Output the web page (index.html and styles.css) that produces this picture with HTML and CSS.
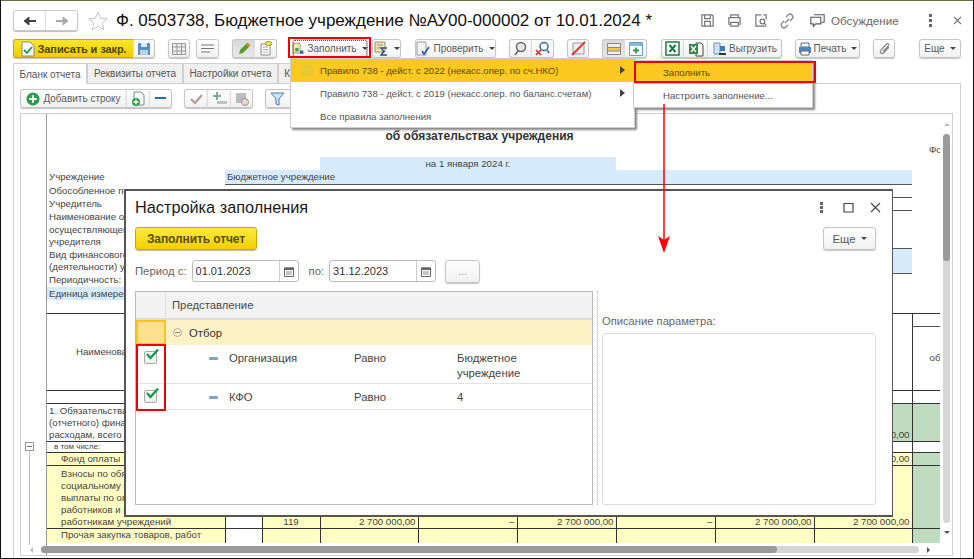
FILE: index.html
```html
<!DOCTYPE html>
<html lang="ru">
<head>
    <meta charset="UTF-8">
    <title>Ф. 0503738</title>
    <link rel="stylesheet" href="styles.css">
</head>
<body>
<div class="window">

    <div class="head">
        <div class="nav">
            <span class="nav-b"><svg width="14" height="10" viewBox="0 0 14 10"><path d="M13 5H5" stroke="#444" stroke-width="2"/><path d="M6 1v8L1 5z" fill="#444" stroke="#444"/></svg></span>
            <span class="nav-b"><svg width="14" height="10" viewBox="0 0 14 10"><path d="M1 5h8" stroke="#aaa" stroke-width="2"/><path d="M8 1v8l5-4z" fill="#aaa" stroke="#aaa"/></svg></span>
        </div>
        <svg class="star" width="22" height="22" viewBox="0 0 22 22"><path d="M11 2l2.700 6.200 6.500.6-4.900 4.400 1.500 6.600L11 16.300l-5.800 3.500 1.500-6.600-4.900-4.400 6.500-.6z" fill="#fff" stroke="#c4c4c4"/></svg>
        <h1>Ф. 0503738, Бюджетное учреждение №АУ00-000002 от 10.01.2024 *</h1>
        <div class="head-tools">
            <svg class="ht1" width="15" height="15" viewBox="0 0 16 16" fill="none" stroke="#777" stroke-width="1.300"><path d="M2 2h11l1 1v11H2zM5 2v4h6V2M5 14v-5h6v5"/></svg>
            <svg class="ht2" width="15" height="15" viewBox="0 0 16 16" fill="none" stroke="#777" stroke-width="1.300"><path d="M4 5V2h8v3M4 12H2V5h12v7h-2M4 10h8v4H4z"/></svg>
            <svg class="ht3" width="15" height="15" viewBox="0 0 16 16" fill="none" stroke="#777" stroke-width="1.300"><path d="M8 2H2v12h11M10 2h3v5"/><circle cx="9" cy="9" r="2.500"/><path d="M11 11l2 2"/></svg>
            <svg class="ht4" width="16" height="16" viewBox="0 0 16 16" fill="none" stroke="#888" stroke-width="1.300"><path d="M7 4l2-2a2.800 2.800 0 0 1 4 4l-2 2M9 12l-2 2a2.800 2.800 0 0 1-4-4l2-2M6 10l4-4"/></svg>
            <svg class="ht5" width="15" height="15" viewBox="0 0 18 16" fill="none" stroke="#555" stroke-width="1.300"><path d="M5 1h12v9h-3M1 4h12v8H7l-3 3v-3H1z"/></svg>
            <span class="discuss">Обсуждение</span>
            <span class="dots"><i></i><i></i><i></i></span>
            <svg class="head-x" width="9" height="9" viewBox="0 0 9 9"><path d="M1 1l7 7M8 1L1 8" stroke="#777" stroke-width="1.100"/></svg>
        </div>
    </div>

    <div class="toolbar">
        <div class="grp">
            <span class="b b-main w120"><svg width="14" height="16" viewBox="0 0 14 16"><path d="M1 1h8l4 4v10H1z" fill="#fff" stroke="#888"/><path d="M3 9l3 3 5-6" fill="none" stroke="#1d9a4d" stroke-width="1.800"/></svg>Записать и закр.</span>
            <span class="b w22"><svg width="14" height="14" viewBox="0 0 14 14"><path d="M1 1h12v12H1z" fill="#5b8fc4"/><path d="M4 1h6v4H4z" fill="#dfe9f3"/><path d="M3 8h8v5H3z" fill="#bcd0e4"/></svg></span>
        </div>
        <div class="grp"><span class="b w22"><svg width="14" height="12" viewBox="0 0 14 12" fill="#eee" stroke="#999"><path d="M.5.5h13v11H.500zM5 .5v11M9.500.5v11M.5 4h13M.5 8h13"/></svg></span></div>
        <div class="grp m6"><span class="b w23"><svg width="13" height="9" viewBox="0 0 13 9" stroke="#777"><path d="M0 1h13M0 4.500h13M0 8h9"/></svg></span></div>
        <div class="grp">
            <span class="b b-on w22"><svg width="14" height="14" viewBox="0 0 14 14"><path d="M2 12l1-4 6-6 3 3-6 6z" fill="#5a9a32"/><path d="M9 2l1.500-1.500 3 3L12 5z" fill="#c9862b"/></svg></span>
            <span class="b w23"><svg width="14" height="15" viewBox="0 0 14 15"><path d="M2 3h9v11H2z" fill="#fff" stroke="#888"/><path d="M4 6h5M4 8.500h5M4 11h5" stroke="#aaa"/><ellipse cx="9.500" cy="2.500" rx="3.500" ry="2" fill="#f3e04a" stroke="#a79a2a"/></svg></span>
        </div>
        <div class="grp m15"><span class="b b-focus w76"><svg width="13" height="13" viewBox="0 0 16 15"><path d="M1 1h9v12H1z" fill="#f0e7b8" stroke="#9b9263"/><path d="M4 7h4v4H4z" fill="#33a04a"/><path d="M10 10h4v4h-4z" fill="#2f5fa8"/></svg>Заполнить<i class="car"></i></span></div>
        <div class="grp m4"><span class="b w29"><svg width="15" height="15" viewBox="0 0 15 15"><path d="M1 1h10v10H1z" fill="#f0e7b8" stroke="#9b9263"/><path d="M3 4h6M3 7h3" stroke="#9b9263"/><path d="M13 7H7l3 3.500L7 14h6" fill="none" stroke="#26508f" stroke-width="1.400"/></svg><i class="car"></i></span></div>
        <div class="grp m14"><span class="b w81"><svg width="15" height="15" viewBox="0 0 15 15"><path d="M1 1h9v13H1z" fill="#f5f5f5" stroke="#999"/><path d="M6 10l2 3 5-7" fill="none" stroke="#2857b5" stroke-width="1.600"/></svg>Проверить<i class="car"></i></span></div>
        <div class="grp">
            <span class="b w22"><svg width="15" height="15" viewBox="0 0 15 15" fill="none" stroke="#666" stroke-width="1.500"><circle cx="8" cy="6" r="4.500" fill="#e8e8e8"/><path d="M5 10l-3 4"/></svg></span>
            <span class="b w23"><svg width="15" height="15" viewBox="0 0 15 15" fill="none" stroke-width="1.500"><circle cx="9" cy="5.500" r="4" stroke="#2e6da4"/><path d="M12 9l2 3" stroke="#2e6da4"/><path d="M1 9l5 5M6 9l-5 5" stroke="#c9302c"/></svg></span>
        </div>
        <div class="grp"><span class="b w22"><svg width="15" height="15" viewBox="0 0 15 15"><path d="M2 2h11v11H2z" fill="#eee" stroke="#999"/><path d="M1 14L14 1" stroke="#d33" stroke-width="1.800"/></svg></span></div>
        <div class="grp">
            <span class="b b-on w22"><svg width="14" height="12" viewBox="0 0 14 12"><path d="M.5.5h13v11H.500z" fill="#eee" stroke="#888"/><path d="M1 5h12v3H1z" fill="#f1c64d"/><path d="M.5 4.500h13M.5 8h13" stroke="#888"/></svg></span>
            <span class="b w23"><svg width="14" height="14" viewBox="0 0 14 14"><path d="M.5.5h13v13H.500z" fill="#fff" stroke="#6a9dc8"/><path d="M1 1h12v3H1z" fill="#8ab7dc"/><path d="M7 5.500v6M4 8.500h6" stroke="#2aa04a" stroke-width="1.800"/></svg></span>
        </div>
        <div class="grp m14">
            <span class="b w22"><svg width="15" height="15" viewBox="0 0 15 15"><path d="M1 1h13v13H1z" fill="#fff" stroke="#1d7a45" stroke-width="1.500"/><path d="M4.500 4l6 7M10.500 4l-6 7" stroke="#1d7a45" stroke-width="2"/></svg></span>
            <span class="b w24"><svg width="16" height="16" viewBox="0 0 16 16"><path d="M8 2h5l2 2v11H8z" fill="#fff" stroke="#444"/><path d="M1 3h9v10H1z" fill="#2f8a4e"/><path d="M3 5l5 6M8 5l-5 6" stroke="#fff" stroke-width="1.300"/></svg></span>
            <span class="b w75"><svg width="15" height="15" viewBox="0 0 15 15"><path d="M2 2h6v11H2z" fill="#cfe0f0" stroke="#6d93b8"/><path d="M8 5h5v5H8z" fill="#3e78b5"/><path d="M7 12h7v2H7z" fill="#333"/></svg>Выгрузить</span>
        </div>
        <div class="grp"><span class="b w65"><svg width="14" height="14" viewBox="0 0 14 14"><path d="M3 1h8v4H3z" fill="#fff" stroke="#667"/><path d="M1 5h12v6H1z" fill="#4e86bd"/><path d="M3 9h8v4H3z" fill="#fff" stroke="#667"/></svg>Печать<i class="car"></i></span></div>
        <div class="grp"><span class="b w22"><svg width="13" height="14" viewBox="0 0 13 14" fill="none" stroke="#888" stroke-width="1.200"><path d="M11 5l-5.500 6a2 2 0 0 1-3-2.500L8.500 2a1.300 1.300 0 0 1 2 1.700L5 9.500"/></svg></span></div>
        <div class="grp m24"><span class="b w42">Еще<i class="car"></i></span></div>
    </div>

    <div class="tabs">
        <span class="tab tab-on w74">Бланк отчета</span>
        <span class="tab w96">Реквизиты отчета</span>
        <span class="tab w95">Настройки отчета</span>
        <span class="tab w56">Контроль</span>
    </div>

    <div class="panel">
        <div class="subbar">
            <div class="grp g0">
                <span class="b w106"><svg width="14" height="14" viewBox="0 0 15 15"><circle cx="7.500" cy="7.500" r="7" fill="#2ba04c"/><path d="M7.500 3.500v8M3.500 7.500h8" stroke="#fff" stroke-width="2"/></svg>Добавить строку</span>
                <span class="b w23"><svg width="14" height="15" viewBox="0 0 14 15"><path d="M3 1h7l3 3v10H3z" fill="#fff" stroke="#7a8a99"/><circle cx="5" cy="11" r="4" fill="#2ba04c"/><path d="M5 8.500v5M2.500 11h5" stroke="#fff" stroke-width="1.300"/></svg></span>
                <span class="b w23"><svg width="11" height="3" viewBox="0 0 11 3"><path d="M0 0h11v2H0z" fill="#1f6fb5"/></svg></span>
            </div>
            <div class="grp m12">
                <span class="b w23"><svg width="13" height="10" viewBox="0 0 13 10"><path d="M1 5l4 4 7-8" fill="none" stroke="#b99a96" stroke-width="2.200"/></svg></span>
                <span class="b w23"><svg width="15" height="13" viewBox="0 0 15 13"><path d="M5 0v8M1 4h8" stroke="#7fa5a0" stroke-width="2"/><path d="M5 9h10v3H5z" fill="#b7c6c4"/></svg></span>
                <span class="b w23"><svg width="14" height="14" viewBox="0 0 14 14"><path d="M1 1h10v10H1z" fill="#b9bcc0"/><circle cx="10" cy="10" r="3.500" fill="#ddd" stroke="#b38a80"/></svg></span>
            </div>
            <div class="grp m12"><span class="b w40"><svg class="filter" width="15" height="14" viewBox="0 0 15 14"><path d="M1 1h13L9 7v6l-3-1V7z" fill="#cfe2f2" stroke="#4f7fa8"/></svg></span></div>
        </div>

        <div class="sheet">
            <div class="gutter"><span class="fold"></span><span class="fold-line"></span></div>
            <div class="sheet-view">
                <table class="rep">
                    <colgroup>
                        <col class="c178"><col class="c37"><col class="c58"><col class="c98"><col class="c99"><col class="c99"><col class="c99"><col class="c99"><col class="c98"><col class="c60">
                    </colgroup>
                    <tr class="h15"><td colspan="10"></td></tr>
                    <tr class="h14"><td colspan="9" class="title">об обязательствах учреждения</td><td></td></tr>
                    <tr class="h14"><td colspan="9"></td><td class="side-text">Фо</td></tr>
                    <tr class="h13"><td colspan="3"></td><td colspan="3" class="blue ctr">на 1 января 2024 г.</td><td colspan="4"></td></tr>
                    <tr class="h14"><td>Учреждение</td><td colspan="8" class="blue ul">Бюджетное учреждение</td><td></td></tr>
                    <tr class="h13"><td>Обособленное подразделение</td><td colspan="8" class="ul"></td><td></td></tr>
                    <tr class="h13"><td>Учредитель</td><td colspan="8" class="ul"></td><td></td></tr>
                    <tr class="h13"><td>Наименование органа,</td><td colspan="9"></td></tr>
                    <tr class="h13"><td>осуществляющего полномочия</td><td colspan="9"></td></tr>
                    <tr class="h12"><td>учредителя</td><td colspan="8" class="ul"></td><td></td></tr>
                    <tr class="h13"><td>Вид финансового обеспечения</td><td colspan="8" class="blue"></td><td></td></tr>
                    <tr class="h12"><td>(деятельности) учреждения</td><td colspan="8" class="blue ul"></td><td></td></tr>
                    <tr class="h14"><td>Периодичность: годовая</td><td colspan="9"></td></tr>
                    <tr class="h13"><td class="blue">Единица измерения: руб.</td><td colspan="9"></td></tr>
                    <tr class="h13"><td colspan="10" class="ul-end"></td></tr>
                    <tr class="h13"><td rowspan="2" class="ctr">Наименование показателя</td><td rowspan="2" colspan="7"></td><td rowspan="2"></td><td class="ul vl"></td></tr>
                    <tr class="h64"><td class="vl side-text">об</td></tr>
                    <tr class="h13 grid-row"><td colspan="9"></td><td></td></tr>
                    <tr class="h38 grid-row bottom-text">
                        <td>1. Обязательства текущего<br>(отчетного) финансового года по<br>расходам, всего</td><td></td><td></td><td></td><td></td><td></td><td></td><td></td><td class="num green">2 700 000,00</td><td class="green"></td>
                    </tr>
                    <tr class="h11"><td class="small">в том числе:</td><td colspan="8"></td><td class="vl"></td></tr>
                    <tr class="h13 grid-row">
                        <td class="yel indent">Фонд оплаты труда</td><td></td><td class="yel"></td><td class="yel"></td><td class="yel"></td><td class="yel"></td><td class="yel"></td><td class="yel"></td><td class="yel num">2 700 000,00</td><td class="green"></td>
                    </tr>
                    <tr class="h63 grid-row bottom-text">
                        <td class="yel indent">Взносы по обязательному<br>социальному страхованию на<br>выплаты по оплате труда<br>работников и иные выплаты<br>работникам учреждений</td><td></td><td class="yel ctr">119</td><td class="yel num">2 700 000,00</td><td class="yel num">–</td><td class="yel num">2 700 000,00</td><td class="yel num">–</td><td class="yel num">2 700 000,00</td><td class="yel num">2 700 000,00</td><td class="green"></td>
                    </tr>
                    <tr class="h24 grid-row top-text">
                        <td class="yel indent">Прочая закупка товаров, работ</td><td></td><td class="yel"></td><td class="yel"></td><td class="yel"></td><td class="yel"></td><td class="yel"></td><td class="yel"></td><td class="yel"></td><td class="green"></td>
                    </tr>
                </table>
            </div>
            <div class="vscroll"><i class="arr-up"></i><span class="v-track"><span class="v-thumb"></span></span><i class="arr-down"></i></div>
            <div class="hscroll"><i class="arr-left"></i><span class="h-track"><span class="h-thumb"></span></span><i class="arr-right"></i></div>
        </div>
    </div>

    <!-- выпадающее меню -->
    <div class="menu menu-rules">
        <div class="mi mi-on"><span class="mi-dot"></span>Правило 738 - дейст. с 2022 (некасс.опер. по сч.НКО)<i class="mi-arr"></i></div>
        <div class="mi">Правило 738 - дейст. с 2019 (некасс.опер. по баланс.счетам)<i class="mi-arr"></i></div>
        <div class="mi">Все правила заполнения</div>
    </div>
    <div class="menu menu-fill">
        <div class="mi mi-on">Заполнить</div>
        <div class="mi">Настроить заполнение...</div>
    </div>

    <!-- окно настройки -->
    <div class="dlg">
        <div class="dlg-head">
            <h2>Настройка заполнения</h2>
            <span class="dlg-ctl">
                <span class="dots dots-dlg"><i></i><i></i><i></i></span>
                <svg width="11" height="11" viewBox="0 0 11 11"><path d="M1 1.500h9v8.500H1z" fill="none" stroke="#444" stroke-width="1.200"/></svg>
                <svg width="11" height="11" viewBox="0 0 11 11"><path d="M1 1l9 9M10 1l-9 9" stroke="#444" stroke-width="1.100"/></svg>
            </span>
        </div>
        <div class="dlg-bar">
            <span class="btn-fill">Заполнить отчет</span>
            <span class="b btn-more">Еще<i class="car"></i></span>
        </div>
        <div class="period">
            <span>Период с:</span>
            <span class="date">01.01.2023<span class="cal"><svg width="10" height="11" viewBox="0 0 10 11"><path d="M.5 2h9v8.500h-9z" fill="#fff" stroke="#666"/><path d="M0 1.500h10V4H0z" fill="#666"/><path d="M2 6h6M2 8h6" stroke="#888"/></svg></span></span>
            <span class="po">по:</span>
            <span class="date">31.12.2023<span class="cal"><svg width="10" height="11" viewBox="0 0 10 11"><path d="M.5 2h9v8.500h-9z" fill="#fff" stroke="#666"/><path d="M0 1.500h10V4H0z" fill="#666"/><path d="M2 6h6M2 8h6" stroke="#888"/></svg></span></span>
            <span class="b btn-dots">...</span>
        </div>
        <div class="dlg-body">
            <div class="tree">
                <div class="tr tr-head"><span class="mark"></span><span class="tr-cap">Представление</span></div>
                <div class="tr tr-group"><span class="mark mark-on"></span><span class="tr-cap"><i class="minus-c"></i>Отбор</span></div>
                <div class="tr tr-org">
                    <span class="mark"><i class="chk"><svg width="15" height="13" viewBox="0 0 15 13"><path d="M2 6l3.500 4L13 1.500" fill="none" stroke="#0f9a4c" stroke-width="2.300"/></svg></i></span>
                    <span class="cell-name"><i class="minus-b"></i>Организация</span><span class="cell-op">Равно</span><span class="cell-val">Бюджетное учреждение</span>
                </div>
                <div class="tr tr-kfo">
                    <span class="mark"><i class="chk"><svg width="15" height="13" viewBox="0 0 15 13"><path d="M2 6l3.500 4L13 1.500" fill="none" stroke="#0f9a4c" stroke-width="2.300"/></svg></i></span>
                    <span class="cell-name"><i class="minus-b"></i>КФО</span><span class="cell-op">Равно</span><span class="cell-val">4</span>
                </div>
            </div>
            <div class="split"></div>
            <div class="descr">
                <span class="descr-cap">Описание параметра:</span>
                <div class="descr-box"></div>
            </div>
        </div>
    </div>

    <!-- красные пометки -->
    <span class="mark-red mr-fill"></span>
    <span class="mark-red mr-item"></span>
    <span class="mark-red mr-chk"></span>
    <svg class="arrow" width="14" height="150" viewBox="0 0 14 150"><path d="M7 0v138" stroke="#f00" stroke-width="1.500"/><path d="M1 132l6 4 6-4-6 17z" fill="#f00"/></svg>
</div>
</body>
</html>
```

FILE: styles.css
```css
* {
    margin: 0;
    padding: 0;
    box-sizing: border-box;
}

html, body {
    width: 974px;
    height: 559px;
    overflow: hidden;
    background: #111;
}

body {
    font-family: "Liberation Sans", "Noto Sans", sans-serif;
    font-size: 10px;
    color: #4b4b4b;
}

i {
    display: block;
    font-style: normal;
}

svg {
    flex: none;
}

.window {
    position: relative;
    width: 972px;
    height: 558px;
    margin-left: 1px;
    padding-top: 1px;
    background: #fff;
    border-top: 1px solid #6b6b3c;
    overflow: hidden;
}

/* шапка */
.head {
    display: flex;
    align-items: center;
    height: 37px;
    padding-left: 12px;
}

.nav {
    flex: none;
    display: flex;
    width: 65px;
    height: 21px;
    border: 1px solid #c9c9c9;
    border-radius: 3px;
    box-shadow: 0 1px 1px #bbb;
}

.nav-b {
    flex: 1;
    display: flex;
    align-items: center;
    justify-content: center;
}

.nav-b + .nav-b {
    border-left: 1px solid #ddd;
}

.star {
    margin-left: 9px;
}

h1 {
    flex: none;
    margin-left: 7px;
    font-size: 17px;
    font-weight: normal;
    color: #111;
    white-space: nowrap;
}

.head-tools {
    display: flex;
    align-items: center;
    margin-left: 48px;
}

.ht2, .ht3 {
    margin-left: 12px;
}

.ht4 {
    margin-left: 10px;
}

.ht5 {
    margin-left: 15px;
}

.discuss {
    margin-left: 6px;
    font-size: 11.600px;
    color: #666;
}

.dots {
    display: flex;
    flex-direction: column;
    gap: 2px;
    margin-left: 30px;
}

.dots i {
    width: 3px;
    height: 3px;
    background: #666;
}

.head-x {
    margin-left: 21px;
}

/* панели кнопок */
.toolbar {
    display: flex;
    height: 19px;
    padding-left: 12px;
}

.grp {
    display: flex;
    margin-left: 13px;
}

.grp:first-child, .g0 {
    margin-left: 0;
}

.m4 { margin-left: 4px; }
.m6 { margin-left: 6px; }
.m12 { margin-left: 12px; }
.m14 { margin-left: 14px; }
.m15 { margin-left: 15px; }
.m24 { margin-left: 24px; }

.w22 { width: 22px; }
.w23 { width: 23px; }
.w24 { width: 24px; }
.w29 { width: 29px; }
.w40 { width: 40px; }
.w42 { width: 42px; }
.w56 { width: 56px; }
.w65 { width: 65px; }
.w74 { width: 74px; }
.w75 { width: 75px; }
.w76 { width: 76px; }
.w81 { width: 81px; }
.w95 { width: 95px; }
.w96 { width: 96px; }
.w106 { width: 106px; }
.w120 { width: 120px; }

.b {
    display: flex;
    align-items: center;
    justify-content: center;
    gap: 2px;
    height: 19px;
    background: linear-gradient(#fff, #f1f1f1);
    border: 1px solid #c6c6c6;
    border-radius: 3px;
    box-shadow: 0 1px 1px #c4c4c4;
    font-size: 10px;
    color: #5a5a5a;
    white-space: nowrap;
}

.grp .b + .b {
    border-left-color: #ddd;
    border-top-left-radius: 0;
    border-bottom-left-radius: 0;
}

.grp .b:not(:last-child) {
    border-right: 0;
    border-top-right-radius: 0;
    border-bottom-right-radius: 0;
}

.b-main {
    gap: 3px;
    background: linear-gradient(#f9e62a, #efcd00);
    border-color: #c9a900;
    color: #4d4300;
    font-size: 11px;
    font-weight: bold;
    letter-spacing: -.1px;
}

.b-on {
    background: linear-gradient(#d9d9d9, #e8e8e8);
}

.b-focus {
    outline: 1px dotted #555;
    outline-offset: -2px;
}

.car {
    flex: none;
    width: 0;
    height: 0;
    margin-left: 3px;
    border: 3px solid transparent;
    border-top: 3px solid #444;
    border-bottom: 0;
}

.tabs {
    display: flex;
    height: 20px;
    margin-top: 5px;
    padding-left: 12px;
    font-size: 10px;
}

.tab {
    display: flex;
    align-items: center;
    justify-content: center;
    background: #f0f0f0;
    border: 1px solid #cfcfcf;
    border-bottom: 0;
    color: #555;
    white-space: nowrap;
    overflow: hidden;
}

.tab-on {
    position: relative;
    z-index: 1;
    height: 21px;
    background: #fff;
}

.panel {
    width: 948px;
    height: 476px;
    margin-left: 12px;
    padding: 5px 0 0 6px;
    border: 1px solid #cfcfcf;
    border-bottom: 0;
}

.subbar {
    display: flex;
    height: 19px;
}

.w106 {
    gap: 3px;
}

.filter {
    margin: 0 auto 0 4px;
}

/* таблица отчета */
.sheet {
    position: relative;
    display: flex;
    width: 933px;
    height: 443px;
    margin-top: 5px;
    border: 1px solid #cfcfcf;
}

.gutter {
    position: relative;
    flex: none;
    width: 26px;
    border-right: 1px solid #999;
}

.fold {
    position: absolute;
    left: 4px;
    top: 328px;
    width: 9px;
    height: 9px;
    background: linear-gradient(#777, #777) center/5px 1px no-repeat #fff;
    border: 1px solid #999;
}

.fold-line {
    position: absolute;
    left: 8px;
    top: 337px;
    width: 1px;
    height: 94px;
    background: #bbb;
}

.sheet-view {
    width: 893px;
    height: 429px;
    overflow: hidden;
}

.rep {
    table-layout: fixed;
    width: 925px;
    border-collapse: collapse;
    font-size: 9.700px;
    color: #444;
}

.rep td {
    padding: 0 2px;
    line-height: 12px;
    white-space: nowrap;
    overflow: hidden;
}

.c178 { width: 178px; }
.c37 { width: 37px; }
.c58 { width: 58px; }
.c98 { width: 98px; }
.c99 { width: 99px; }
.c60 { width: 60px; }

.h11 { height: 11px; }
.h12 { height: 12px; }
.h13 { height: 13px; }
.h14 { height: 14px; }
.h15 { height: 15px; }
.h24 { height: 24px; }
.h38 { height: 38px; }
.h63 { height: 63px; }
.h64 { height: 64px; }

.rep .title {
    text-align: center;
    font-size: 12px;
    font-weight: bold;
    color: #333;
}

.blue { background: #d6ecfd; }
.yel { background: #ffffc4; }
.green { background: #c0dcc0; }

.ctr { text-align: center; }
.num { text-align: right; }
.ul { border-bottom: 1px solid #555; }
.ul-end { border-bottom: 1px solid #333; }
.vl { border-left: 1px solid #333; }

.rep .side-text {
    padding-left: 17px;
}

.rep .small {
    padding-left: 7px;
    font-size: 8px;
    line-height: 9px;
}

.rep .indent {
    padding-left: 14px;
}

.grid-row td {
    border: 1px solid #333;
}

.grid-row td:first-child {
    border-left: 0;
}

.grid-row td:last-child {
    border-right: 0;
}

.rep .h13.grid-row td {
    line-height: 11px;
}

.bottom-text td {
    vertical-align: bottom;
}

.top-text td {
    vertical-align: top;
}

.vscroll {
    position: absolute;
    right: 2px;
    top: 9px;
    width: 7px;
    height: 411px;
    display: flex;
    flex-direction: column;
    align-items: center;
    gap: 8px;
}

.v-track {
    flex: 1;
    width: 7px;
    background: #d6d6d6;
    border-radius: 4px;
}

.v-thumb {
    display: block;
    height: 127px;
    background: #9a9a9a;
    border-radius: 4px;
}

.hscroll {
    position: absolute;
    left: 9px;
    bottom: 2px;
    width: 900px;
    height: 7px;
    display: flex;
    align-items: center;
    gap: 8px;
}

.h-track {
    flex: 1;
    height: 7px;
    background: #d6d6d6;
    border-radius: 4px;
}

.h-thumb {
    display: block;
    width: 736px;
    height: 7px;
    background: #9a9a9a;
    border-radius: 4px;
}

.arr-up, .arr-down, .arr-left, .arr-right {
    width: 0;
    height: 0;
    border: 3px solid transparent;
}

.arr-up { border-bottom-color: #bbb; border-top: 0; }
.arr-down { border-top-color: #555; border-bottom: 0; }
.arr-left { border-right-color: #bbb; border-left: 0; }
.arr-right { border-left-color: #555; border-right: 0; }

/* меню */
.menu {
    position: absolute;
    z-index: 5;
    background: #fff;
    border: 1px solid #ccc;
    box-shadow: 2px 2px 2px #888;
    font-size: 9.600px;
    color: #555;
}

.menu-rules {
    left: 289px;
    top: 57px;
    width: 345px;
    height: 70px;
}

.menu-fill {
    left: 632px;
    top: 59px;
    width: 180px;
    height: 48px;
    z-index: 6;
}

.mi {
    position: relative;
    display: flex;
    align-items: center;
    height: 23px;
    padding-left: 29px;
    white-space: nowrap;
}

.mi-on {
    background: #fbc91f;
    color: #5e4a00;
}

.mi-dot {
    position: absolute;
    left: 10px;
    top: 5px;
    width: 13px;
    height: 13px;
    background: #e8c832;
    border-radius: 50%;
}

.mi-arr {
    position: absolute;
    right: 9px;
    top: 7px;
    width: 0;
    height: 0;
    border: 4px solid transparent;
    border-left: 5px solid #444;
    border-right: 0;
}

/* диалог */
.dlg {
    position: absolute;
    z-index: 4;
    left: 123px;
    top: 188px;
    width: 769px;
    height: 328px;
    padding: 0 16px 0 9px;
    background: #fff;
    border: 2px solid #555;
    border-right-width: 1px;
}

.dlg-head {
    display: flex;
    align-items: center;
    justify-content: space-between;
    height: 36px;
    padding-bottom: 4px;
}

h2 {
    font-size: 16.300px;
    font-weight: normal;
    color: #1a1a1a;
}

.dlg-ctl {
    display: flex;
    align-items: center;
    gap: 16px;
    margin-right: -5px;
}

.dots-dlg {
    gap: 1px;
    margin: 0 4px 0 0;
}

.dlg-bar {
    display: flex;
    justify-content: space-between;
    height: 24px;
}

.btn-fill {
    display: flex;
    align-items: center;
    justify-content: center;
    width: 122px;
    height: 23px;
    background: linear-gradient(#fcea3c, #f3d000);
    border: 1px solid #c9a900;
    border-radius: 3px;
    box-shadow: 0 1px 1px #bbb;
    font-size: 12px;
    font-weight: bold;
    color: #5a4d00;
    letter-spacing: -.1px;
}

.btn-more {
    width: 53px;
    height: 23px;
    font-size: 11.300px;
}

.period {
    display: flex;
    align-items: center;
    height: 24px;
    margin-top: 8px;
    font-size: 11.300px;
    color: #666;
}

.date {
    display: flex;
    align-items: center;
    justify-content: space-between;
    width: 107px;
    height: 22px;
    margin-left: 5px;
    padding-left: 3px;
    border: 1px solid #bbb;
    border-radius: 3px;
    font-size: 11px;
    color: #333;
}

.cal {
    display: flex;
    align-items: center;
    justify-content: center;
    width: 19px;
    height: 20px;
    border-left: 1px solid #ccc;
}

.po {
    margin-left: 10px;
}

.btn-dots {
    width: 35px;
    height: 23px;
    margin-left: 9px;
    color: #999;
}

.dlg-body {
    display: flex;
    height: 214px;
    margin-top: 8px;
}

.tree {
    width: 458px;
    border: 1px solid #bbb;
    font-size: 11.300px;
}

.tr {
    display: flex;
    border-bottom: 1px solid #e4e4e4;
}

.mark {
    flex: none;
    width: 30px;
    border-right: 1px solid #e2e2e2;
}

.tr-cap {
    display: flex;
    align-items: center;
    padding-left: 6px;
}

.tr-head {
    height: 28px;
    background: #f2f2f2;
    border-bottom: 2px solid #ddd;
}

.tr-group {
    height: 25px;
    background: #fdf2c5;
    border-bottom: 0;
    color: #333;
}

.mark-on {
    background: #fde18c;
    border: 2px solid #fac325;
}

.tr-org { height: 39px; }
.tr-kfo { height: 26px; }

.tr-org, .tr-kfo {
    color: #444;
}

.tr-org .mark, .tr-kfo .mark {
    border-right-color: transparent;
    padding: 6px 0 0 8px;
}

.chk {
    position: relative;
    width: 13px;
    height: 13px;
    background: linear-gradient(#fff, #eee);
    border: 1px solid #aaa;
    border-radius: 2px;
}

.chk svg {
    position: absolute;
    left: 0;
    top: -4px;
}

.minus-c {
    width: 9px;
    height: 9px;
    margin: 0 7px 0 1px;
    border: 1px solid #aaa;
    border-radius: 50%;
    background: linear-gradient(#888, #888) center/5px 1px no-repeat;
}

.minus-b {
    flex: none;
    width: 9px;
    height: 3px;
    margin: 0 11px 0 0;
    background: #7fa3c4;
    border-radius: 1px;
}

.cell-name {
    display: flex;
    align-items: center;
    align-self: flex-start;
    width: 188px;
    height: 26px;
    padding-left: 43px;
}

.cell-op {
    width: 103px;
    padding-top: 7px;
}

.cell-val {
    width: 90px;
    padding-top: 6px;
    line-height: 15px;
}

.split {
    width: 1px;
    margin-left: 4px;
    margin-right: 4px;
    border-left: 1px dotted #bbb;
}

.descr {
    display: flex;
    flex-direction: column;
    width: 274px;
}

.descr-cap {
    height: 42px;
    padding-top: 24px;
    font-size: 11.200px;
    color: #666;
}

.descr-box {
    flex: 1;
    border: 1px solid #ddd;
    border-radius: 3px;
}

/* красные пометки */
.mark-red {
    position: absolute;
    z-index: 8;
    border: 2px solid #e8000d;
}

.mr-fill {
    left: 287px;
    top: 36px;
    width: 83px;
    height: 21px;
}

.mr-item {
    left: 633px;
    top: 60px;
    width: 182px;
    height: 22px;
}

.mr-chk {
    left: 135px;
    top: 343px;
    width: 30px;
    height: 67px;
}

.arrow {
    position: absolute;
    z-index: 9;
    left: 656px;
    top: 103px;
}
```
